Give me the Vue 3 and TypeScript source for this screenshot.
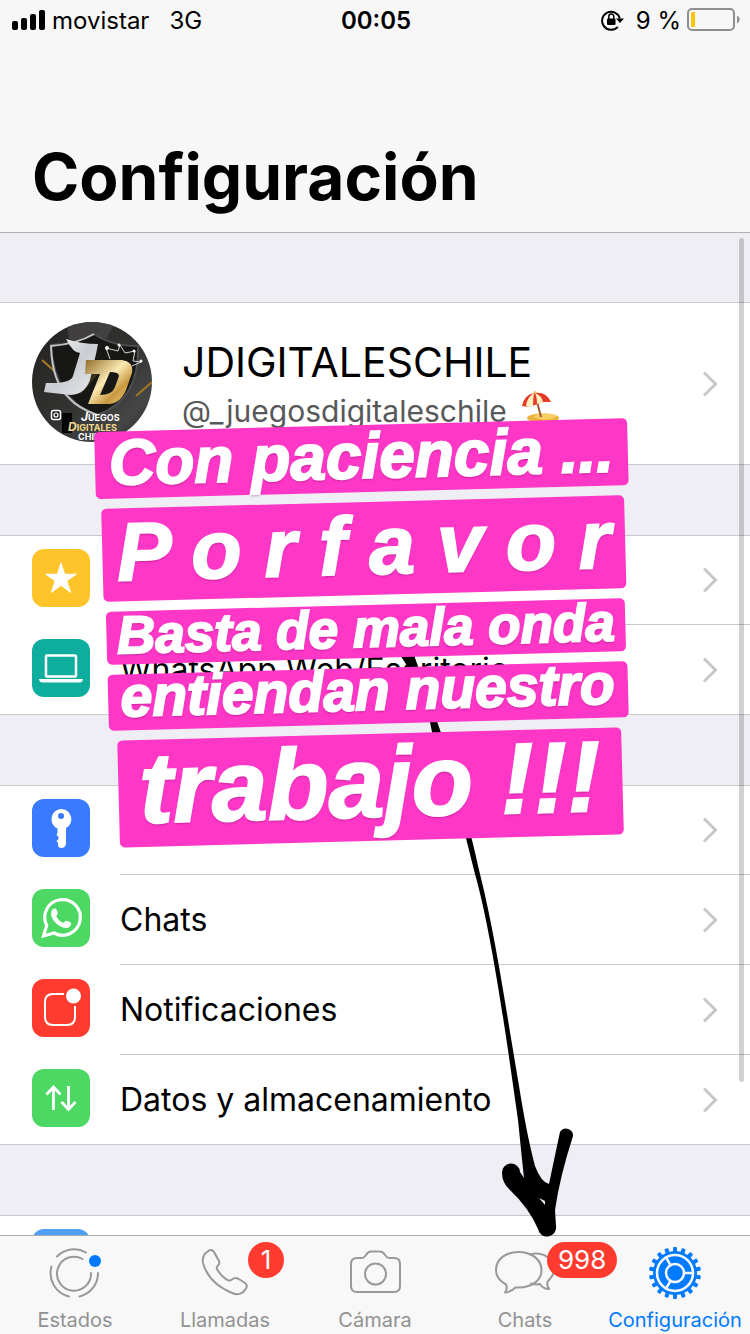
<script setup lang="ts">
interface Row {
  id: string
  label: string
  color: string
}

interface Tab {
  id: string
  label: string
  badge?: string
  active?: boolean
}

interface Banner {
  text: string
  size: string
}

const groups: Row[][] = [
  [
    { id: 'star', label: 'Mensajes destacados', color: '#fec42a' },
    { id: 'laptop', label: 'WhatsApp Web/Escritorio', color: '#0fad9e' },
  ],
  [
    { id: 'key', label: 'Cuenta', color: '#3a7afe' },
    { id: 'chat', label: 'Chats', color: '#4cd863' },
    { id: 'bell', label: 'Notificaciones', color: '#ff3b2f' },
    { id: 'data', label: 'Datos y almacenamiento', color: '#4cd863' },
  ],
]

const tabs: Tab[] = [
  { id: 'status', label: 'Estados' },
  { id: 'calls', label: 'Llamadas', badge: '1' },
  { id: 'camera', label: 'Cámara' },
  { id: 'chats', label: 'Chats', badge: '998' },
  { id: 'settings', label: 'Configuración', active: true },
]

const banners: Banner[] = [
  { text: 'Con paciencia ...', size: 'one' },
  { text: 'P o r f a v o r', size: 'two' },
  { text: 'Basta de mala onda', size: 'three' },
  { text: 'entiendan nuestro', size: 'four' },
  { text: 'trabajo !!!', size: 'five' },
]

const teeth: number[] = Array.from({ length: 18 }, (_, i) => i * 20)
</script>

<template>
  <div class="screen">
    <header class="top">
      <div class="status">
        <div class="status-left">
          <svg width="34" height="20" viewBox="0 0 34 20" aria-hidden="true">
            <rect x="0" y="11" width="6" height="9" rx="2" />
            <rect x="9" y="8" width="6" height="12" rx="2" />
            <rect x="18" y="4" width="6" height="16" rx="2" />
            <rect x="27" y="0" width="6" height="20" rx="2" />
          </svg>
          <span>movistar</span>
          <span class="network">3G</span>
        </div>
        <time class="clock">00:05</time>
        <div class="status-right">
          <svg class="lock" width="23" height="22" viewBox="0 0 23 22" aria-hidden="true">
            <path d="M16.8 17.8A9 9 0 1 1 18.8 9.5" fill="none" stroke="#000" stroke-width="2" />
            <path d="M15 9.500h8l-4 4.500z" />
            <rect x="6" y="9.500" width="8.500" height="6.500" rx="1" />
            <path d="M7.800 10V7.500a2.500 2.500 0 0 1 5 0V10" fill="none" stroke="#000" stroke-width="1.500" />
          </svg>
          <span>9 %</span>
          <svg width="53" height="24" viewBox="0 0 53 24" aria-hidden="true">
            <rect x="1" y="1" width="46" height="21" rx="4" fill="none" stroke="#8e8e90" stroke-width="2" />
            <rect x="4" y="4" width="4" height="15" rx="1" fill="#fdc60a" />
            <path d="M50 7.500v8c3.500-1.500 3.500-6.500 0-8z" fill="#8e8e90" />
          </svg>
        </div>
      </div>
      <h1>Configuración</h1>
    </header>

    <main class="content">
      <section class="group profile-group">
        <a class="profile" href="#perfil">
          <svg class="avatar" width="120" height="120" viewBox="0 0 120 120" role="img" aria-label="Juegos Digitales Chile">
            <defs>
              <clipPath id="disc"><circle cx="60" cy="60" r="60" /></clipPath>
              <linearGradient id="dark" x1="0" y1="0" x2="1" y2="1">
                <stop offset="0" stop-color="#222120" />
                <stop offset="0.55" stop-color="#343433" />
                <stop offset="0.8" stop-color="#454746" />
                <stop offset="1" stop-color="#1d1d1d" />
              </linearGradient>
              <linearGradient id="silver" x1="0" y1="0" x2="1" y2="1">
                <stop offset="0" stop-color="#ffffff" />
                <stop offset="0.5" stop-color="#c9ccd1" />
                <stop offset="1" stop-color="#e8eaed" />
              </linearGradient>
              <linearGradient id="gold" x1="0" y1="0" x2="1" y2="1">
                <stop offset="0" stop-color="#8f6c28" />
                <stop offset="0.45" stop-color="#fbe9b4" />
                <stop offset="0.7" stop-color="#c8983f" />
                <stop offset="1" stop-color="#f5d68c" />
              </linearGradient>
            </defs>
            <g clip-path="url(#disc)">
              <rect width="120" height="120" fill="url(#dark)" />
              <path d="M35 0h48l-8 16-38 4z" fill="#4b4849" opacity=".7" />
              <path d="M10 38l18 16M104 74l16-14" stroke="#a47a20" stroke-width="2" />
              <path d="M19 23Q45 22 62 12Q80 24 106 24Q108 78 65 93Q22 78 19 23z" fill="#171716" stroke="#4c4e4f" stroke-width="2" />
              <path d="M62 12Q45 22 19 24Q20 60 37 76Q46 86 65 93" fill="none" stroke="#c0c2c4" stroke-width="2" />
              <path d="M47 36l30 4-28 32-12-8z" fill="#59481f" opacity=".5" />
              <path d="M34 17q15 5 32 5l-2 10-6 26q-5 14-19 15l-27-3 2-9q25 1 27-7l7-23q-7 0-14-14z" fill="url(#silver)" />
              <path d="M54 38h36q12 2 10 13l-6 17q-6 14-18 14H56l12-30H53zM78 50L68 73q12 0 15-8l4-11q0-4-9-4z" fill="url(#gold)" fill-rule="evenodd" />
              <path d="M78 37l-4-11 12 3 2-6 5 8 10-2-2 10 8 1-9 4" fill="none" stroke="#d4d4d0" stroke-width="1" />
              <g fill="#f4f4ee"><circle cx="75" cy="26" r="2" /><circle cx="87" cy="23" r="1.500" /><circle cx="102" cy="29" r="1.500" /><circle cx="109" cy="39" r="1.500" /></g>
              <rect x="19.500" y="88.500" width="9" height="9" rx="2" fill="#222" stroke="#fff" stroke-width="1.500" />
              <circle cx="24" cy="93" r="2" fill="none" stroke="#fff" stroke-width="1.200" />
              <rect x="30" y="91" width="10" height="20" fill="#050505" />
              <text x="49" y="99" class="logo-small" fill="#fff"><tspan class="logo-cap">J</tspan>UEGOS</text>
              <text x="36" y="109" class="logo-small" fill="#f3d98d"><tspan class="logo-cap">D</tspan>IGITALES</text>
              <text x="46" y="118" class="logo-small" fill="#fff">CHILE</text>
            </g>
          </svg>
          <span class="profile-text">
            <strong>JDIGITALESCHILE</strong>
            <span class="handle">
              @_juegosdigitaleschile
              <svg width="38" height="34" viewBox="0 0 38 34" role="img" aria-label="Sombrilla de playa">
                <ellipse cx="22" cy="28" rx="16" ry="4.500" fill="#edb339" />
                <ellipse cx="24" cy="26.500" rx="11" ry="3" fill="#f8cf63" />
                <path d="M14 4l6 23" stroke="#9a5b36" stroke-width="2" />
                <path d="M1 16Q3 5 13 3Q25 1 30 12l-8 0-8 3-7 2z" fill="#e8392b" />
                <path d="M5 16Q6 7 13 3Q12 9 12 16l-5 1zM14 3q7 3 8 9l-6 2Q16 7 14 3z" fill="#fff1bd" />
                <circle cx="14" cy="2.500" r="1.500" fill="#f4c24a" />
              </svg>
            </span>
          </span>
          <svg class="chevron" width="16" height="26" viewBox="0 0 16 26" aria-hidden="true"><path d="M2 1.500L13.500 13L2 24.500" /></svg>
        </a>
      </section>

      <section v-for="(group, g) in groups" :key="g" class="group">
        <a v-for="row in group" :key="row.id" class="row" :href="'#' + row.id">
          <span class="tile" :style="{ background: row.color }">
            <svg width="58" height="58" viewBox="0 0 58 58" aria-hidden="true">
              <path v-if="row.id === 'star'" fill="#fff" d="M29 12.500l4 12.200h12.500L35.400 32l4 12.500L29 36.800l-10.400 7.700 4-12.500-10.100-7.300H25z" />
              <g v-else-if="row.id === 'laptop'">
                <rect x="14" y="16.500" width="30" height="21" fill="none" stroke="#fff" stroke-width="2.500" rx="1" />
                <path d="M7 40h44q-.5 3.500-3.500 3.500h-37Q7.500 43.500 7 40z" fill="#fff" />
              </g>
              <g v-else-if="row.id === 'key'">
                <path fill="#fff" fill-rule="evenodd" d="M29 10a10.200 10.200 0 0 1 5 19.200V45q-1 4-4.500 4-3.500-.5-3.500-3v-2l-1.500-2 2-2v-2l-2-2 1-2.500v-4A10.200 10.200 0 0 1 29 10zm0 4a3 3 0 1 0 .1 6 3 3 0 0 0-.1-6z" />
              </g>
              <g v-else-if="row.id === 'chat'">
                <path d="M11.500 47l3.200-10.500A17.800 17.800 0 1 1 22 44z" fill="none" stroke="#fff" stroke-width="3.200" />
                <path d="M20 21c1.500-2 4-2 4.800 0l1 3c.4 1.300-1.500 2.400-1.500 3.500 1.700 3 3.700 5 6.700 6.200 1.200.2 2.200-2.300 3.500-2l3.800 1.500c1.500.8 1 2.800-.3 4.200-2.300 2.200-6 2-10.300-.4-4.200-2.400-7-6-8-9-.8-2.500-.7-5.300.3-7z" fill="#fff" />
              </g>
              <g v-else-if="row.id === 'bell'">
                <path d="M32 15H21q-8 0-8 8v15q0 8 8 8h14q8 0 8-8V27" fill="none" stroke="#fff" stroke-width="2" />
                <circle cx="41.500" cy="17" r="7.500" fill="#fff" />
              </g>
              <g v-else fill="none" stroke="#fff" stroke-width="2.800">
                <path d="M21.500 41V18M14.500 25.500l7-7.500 7 7.500" />
                <path d="M36.500 17v23M29.500 33l7 7.500 7-7.500" />
              </g>
            </svg>
          </span>
          <span class="row-body">
            <span>{{ row.label }}</span>
            <svg class="chevron" width="16" height="26" viewBox="0 0 16 26" aria-hidden="true"><path d="M2 1.500L13.500 13L2 24.500" /></svg>
          </span>
        </a>
      </section>

      <section class="group">
        <div class="row"><span class="tile info"></span></div>
      </section>
      <div class="scrollbar"></div>
    </main>

    <nav class="tabs">
      <a v-for="tab in tabs" :key="tab.id" class="tab" :class="{ active: tab.active }" :href="'#' + tab.id">
        <span class="tab-icon">
          <svg v-if="tab.id === 'status'" width="54" height="54" viewBox="0 0 54 54" aria-hidden="true">
            <path d="M34.500 13A17 17 0 1 0 43 27" />
            <path d="M9 10.500A24 24 0 0 1 38 6.500M3.500 20.500A24 24 0 0 0 21 50.500M31.500 50.500A24 24 0 0 0 50 27" />
            <circle cx="47" cy="15" r="6" fill="#007aff" stroke="none" />
          </svg>
          <svg v-else-if="tab.id === 'calls'" width="54" height="54" viewBox="0 0 54 54" aria-hidden="true">
            <path d="M7 7.500l4-3q3-1.500 5 1.500l5 9q1 3-1.500 5-1.500 2 0 4Q24 31 29.500 34q2 1.200 4.500-.5 3-2.500 6-1l7 4.500q3 2 1 5.500-5.500 8.500-14 4.500Q10.500 37 5 17q-1-5 2-9.500z" />
          </svg>
          <svg v-else-if="tab.id === 'camera'" width="54" height="54" viewBox="0 0 54 54" aria-hidden="true">
            <path d="M9 12h5q2 0 4-3 2-3.500 5-3.500h9q3 0 5 3.500 2 3 4 3h5q6 0 6 6v22q0 6-6 6H9q-6 0-6-6V18q0-6 6-6z" />
            <circle cx="27.500" cy="28" r="10.500" />
          </svg>
          <svg v-else-if="tab.id === 'chats'" class="bubbles" width="62" height="54" viewBox="0 0 62 54" aria-hidden="true">
            <path d="M36 8.500Q48 5 57 14q8 10-3 21-2 3 1 8-6 0-9-5-5 1-9-.5" />
            <path d="M24.500 6C37 6 47.500 13 47.500 24S37 41.500 24.500 41.500q-2 0-3 0Q17 46 11 46.500q3-4 1-8Q2 33 2 24C2 13 12 6 24.500 6z" />
          </svg>
          <svg v-else width="54" height="54" viewBox="0 0 54 54" aria-hidden="true">
            <g stroke="none" fill="#007aff">
              <rect v-for="angle in teeth" :key="angle" x="25" y="1" width="4" height="7" rx="1" :transform="`rotate(${angle} 27 27)`" />
              <circle cx="27" cy="27" r="22" />
            </g>
            <g stroke="#f8f8f8" stroke-width="2.500">
              <circle cx="27" cy="27" r="18" />
              <circle cx="27" cy="27" r="9" />
              <path d="M36 27h9M22.500 19.200L18 11.400M22.500 34.800L18 42.600" />
            </g>
          </svg>
          <span v-if="tab.badge" class="badge">{{ tab.badge }}</span>
        </span>
        <span class="tab-label">{{ tab.label }}</span>
      </a>
    </nav>

    <svg class="arrow" width="180" height="600" viewBox="400 640 180 600" aria-hidden="true">
      <path d="M400 655L414 655L421 675L440 730C458 780 472 838 480 874C494 930 504 996 513 1050L521 1098Q528 1140 535 1166Q541 1182 549 1184Q554 1160 560 1132A7 7 0 0 1 573 1136Q560 1176 555 1210L556 1226A9 9 0 0 1 538 1229Q529 1208 510 1190Q502 1183 502 1173A9 9 0 0 1 520 1172L524 1178Q521 1150 518 1120L508 1050C499 990 488 920 475 874C465 834 452 780 432 732L428 712Q418 680 400 655z" />
      <path d="M539 1198l6 3v4z" class="arrow-hole" />
    </svg>

    <div class="banners">
      <p v-for="banner in banners" :key="banner.size" :class="['banner', banner.size]">{{ banner.text }}</p>
    </div>
  </div>
</template>

<style>
body {
  margin: 0;
}
</style>

<style scoped>
.screen {
  position: relative;
  display: flex;
  flex-direction: column;
  height: 100vh;
  overflow: hidden;
  background: #efeef4;
  color: #000;
  font-family: Inter, "Liberation Sans", sans-serif;
}

a {
  color: inherit;
  text-decoration: none;
}

.top {
  flex: none;
  background: #f7f7f7;
  border-bottom: 1px solid #b2b2b4;
}

.status {
  display: grid;
  grid-template-columns: 1fr auto 1fr;
  align-items: center;
  height: 40px;
  padding: 0 10px 0 12px;
  font-size: 24px;
}

.status-left,
.status-right {
  display: flex;
  align-items: center;
  gap: 6px;
}

.status-right {
  justify-content: flex-end;
}

.network {
  margin-left: 14px;
}

.lock {
  margin-right: 6px;
}

.clock {
  font-weight: 600;
}

h1 {
  margin: 0;
  padding: 97px 32px 15px;
  font-size: 64px;
  font-weight: 700;
  line-height: 80px;
}

.content {
  position: relative;
  display: flex;
  flex: 1;
  flex-direction: column;
  gap: 70px;
  min-height: 0;
  padding-top: 69px;
  overflow: hidden;
}

.group {
  flex: none;
  background: #fff;
  box-shadow: inset 0 1px #c8c7cc, inset 0 -1px #c8c7cc;
}

.profile {
  display: flex;
  align-items: center;
  height: 163px;
  padding-left: 32px;
}

.avatar {
  flex: none;
  margin-bottom: 3px;
}

.logo-small {
  font-size: 9px;
  font-weight: 700;
}

.logo-cap {
  font-size: 12px;
  font-style: italic;
}

.profile-text {
  display: flex;
  flex: 1;
  flex-direction: column;
  padding: 4px 0 0 30px;
}

.profile-text strong {
  font-size: 41px;
  font-weight: 400;
  line-height: 50px;
}

.handle {
  display: flex;
  align-items: center;
  gap: 14px;
  height: 48px;
  color: #58585a;
  font-size: 30px;
}

.handle svg {
  margin-bottom: 8px;
}

.chevron {
  flex: none;
  margin-right: 32px;
  fill: none;
  stroke: #c7c7cc;
  stroke-width: 3;
}

.row {
  display: flex;
  height: 90px;
  padding-left: 32px;
}

.tile {
  flex: none;
  width: 58px;
  height: 58px;
  margin-top: 14px;
  overflow: hidden;
  border-radius: 12px;
}

.tile.info {
  background: #4f9ff5;
}

.row-body {
  display: flex;
  flex: 1;
  align-items: center;
  justify-content: space-between;
  box-sizing: border-box;
  margin-left: 30px;
  border-bottom: 1px solid #c8c7cc;
  font-size: 32px;
}

.row:last-child .row-body {
  border-bottom-color: transparent;
}

.scrollbar {
  position: absolute;
  top: 5px;
  right: 6px;
  width: 5px;
  height: 844px;
  border-radius: 3px;
  background: rgba(0, 0, 0, 0.18);
}

.tabs {
  display: grid;
  flex: none;
  grid-template-columns: repeat(5, 1fr);
  box-sizing: border-box;
  height: 99px;
  border-top: 1px solid #acacae;
  background: #f8f8f8;
}

.tab {
  display: flex;
  flex-direction: column;
  align-items: center;
  color: #929292;
  font-size: 20px;
}

.tab.active {
  color: #007aff;
}

.tab-icon {
  position: relative;
  height: 54px;
  margin-top: 10px;
}

.tab-icon svg {
  fill: none;
  stroke: #999;
  stroke-width: 2;
  stroke-linecap: round;
  stroke-linejoin: round;
}

.tab-label {
  line-height: 24px;
  margin-top: 8px;
}

.badge {
  position: absolute;
  top: -4px;
  left: 50px;
  box-sizing: border-box;
  min-width: 36px;
  height: 36px;
  padding: 0 11px;
  border-radius: 18px;
  background: #ff3b30;
  color: #fff;
  font-size: 26px;
  line-height: 36px;
  text-align: center;
}

.bubbles + .badge {
  left: 53px;
}

.arrow {
  position: absolute;
  top: 640px;
  left: 400px;
}

.arrow-hole {
  fill: #efeef4;
}

.banners {
  position: absolute;
  top: 425px;
  left: calc(50% - 9px);
  display: flex;
  flex-direction: column;
  align-items: center;
  gap: 10px;
  transform: translateX(-50%) rotate(-1.5deg);
}

.banner {
  display: flex;
  align-items: center;
  justify-content: center;
  box-sizing: border-box;
  margin: 0;
  padding-bottom: 6px;
  border-radius: 5px;
  background: #ff37c7;
  color: #fff;
  font-family: "Liberation Sans", Arial, sans-serif;
  font-style: italic;
  font-weight: 700;
  line-height: 1;
  text-shadow: 0 2px 2px rgba(90, 0, 70, 0.35);
  white-space: nowrap;
  -webkit-text-stroke: 2px #fff;
}

.one {
  width: 533px;
  height: 67px;
  font-size: 64px;
}

.two {
  width: 523px;
  height: 93px;
  font-size: 82px;
}

.three {
  width: 519px;
  height: 53px;
  font-size: 53px;
}

.four {
  width: 520px;
  height: 56px;
  padding-bottom: 12px;
  font-size: 57px;
}

.five {
  width: 504px;
  height: 107px;
  padding-bottom: 12px;
  font-size: 100px;
}
</style>
